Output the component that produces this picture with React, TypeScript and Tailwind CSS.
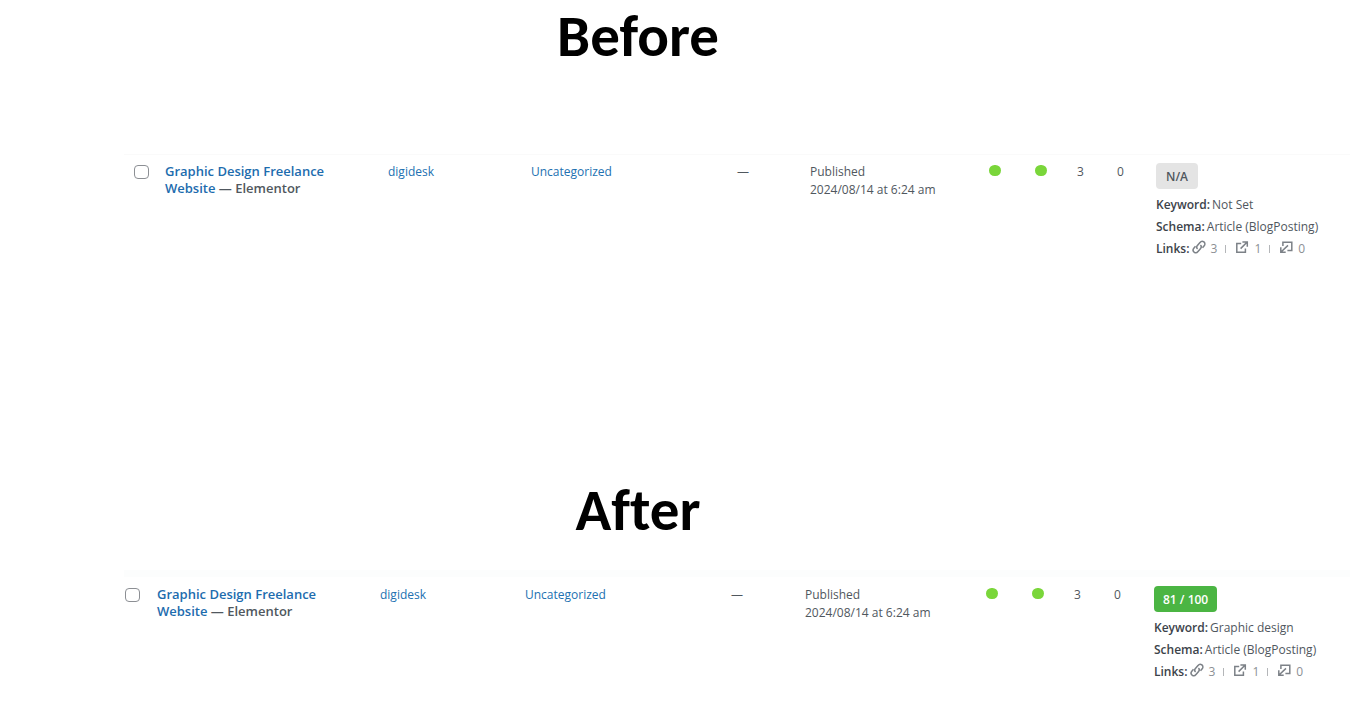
import type { ReactNode } from "react";

type Post = {
  id: string;
  heading: string;
  score: string;
  scoreClass: string;
  keyword: string;
  columns: string[];
  sectionClass: string;
  dividerClass: string;
  tableClass: string;
};

const posts: Post[] = [
  {
    id: "before",
    heading: "Before",
    score: "N/A",
    scoreClass: "bg-[#e4e4e4] px-[10px] text-[#50575e]",
    keyword: "Not Set",
    columns: ["w-[31px]", "w-[223px]", "w-[143px]", "w-[206px]", "w-[73px]", "w-[179px]", "w-[46px]", "w-[42px]", "w-[40px]", "w-[39px]", ""],
    sectionClass: "pt-[2px]",
    dividerClass: "mt-[84px] ml-[124px] h-px bg-[#fafafa]",
    tableClass: "mt-2 pl-[134px]",
  },
  {
    id: "after",
    heading: "After",
    score: "81 / 100",
    scoreClass: "bg-[#4bb543] px-[9px] text-white",
    keyword: "Graphic design",
    columns: ["w-[32px]", "w-[223px]", "w-[145px]", "w-[206px]", "w-[74px]", "w-[181px]", "w-[46px]", "w-[42px]", "w-[40px]", "w-[40px]", ""],
    sectionClass: "pt-[216px]",
    dividerClass: "mt-[26px] ml-[124px] h-[7px] bg-[#fcfdfd]",
    tableClass: "mt-[9px] pl-[125px]",
  },
];

function Icon({ children }: { children: ReactNode }) {
  return (
    <svg viewBox="0 0 14 14" className="mb-1 size-[14px] shrink-0" fill="none" stroke="#7c8187" strokeWidth="1.5" aria-hidden="true">
      {children}
    </svg>
  );
}

function ChainIcon() {
  return (
    <Icon>
      <path d="M5.6 8.8C4.5 7.9 4.5 6.6 5.4 5.5L8 2.4C9 1.2 10.7 1 11.9 1.9C13.1 2.9 13.2 4.5 12.2 5.7L10.5 7.7" />
      <path d="M8.4 5.2C9.5 6.1 9.5 7.4 8.6 8.5L6 11.6C5 12.8 3.3 13 2.1 12.1C.9 11.1 .8 9.5 1.8 8.3L3.5 6.3" />
    </Icon>
  );
}

function ExternalIcon() {
  return (
    <Icon>
      <path d="M6.2 3.5H1.8V12.2H10.4V8.4" />
      <path d="M7.4 1.9H12.3V6.8M12.2 2L5.6 8.6" />
    </Icon>
  );
}

function IncomingIcon() {
  return (
    <Icon>
      <path d="M3.9 6V2.2H12.8V10.4H8.4" />
      <path d="M1.8 7.3V12.2H6.7M2 12L9 5.4" />
    </Icon>
  );
}

function Dot() {
  return <span className="mt-[2px] block h-[11px] w-3 rounded-full bg-[#7ad63a]" />;
}

function Separator() {
  return <span className="mr-[9px] ml-2 h-2 w-px bg-[#b4b6b9]" />;
}

function Detail({ label, children }: { label: string; children: ReactNode }) {
  return (
    <div className="flex items-center whitespace-nowrap leading-[22px]">
      <span className="mr-[2px] font-semibold text-[#3c434a]">{label}:</span>
      {children}
    </div>
  );
}

function PostSection({ post }: { post: Post }) {
  return (
    <section className={post.sectionClass}>
      <h2 className="pr-[74px] text-center font-['Carlito','Calibri','Open_Sans',sans-serif] text-[59px] leading-[68px] font-bold text-black [font-variant-ligatures:none]">
        {post.heading}
      </h2>
      <div className={post.dividerClass} />
      <div className={post.tableClass}>
        <table className="w-full table-fixed border-collapse text-left text-xs leading-[18px] text-[#50575e]">
          <colgroup>
            {post.columns.map((width, i) => (
              <col key={i} className={width} />
            ))}
          </colgroup>
          <tbody>
            <tr className="align-top">
              <td className="pt-[2px]">
                <input
                  type="checkbox"
                  id={`select-${post.id}`}
                  aria-label="Select Graphic Design Freelance Website"
                  className="block h-[14px] w-[15px] appearance-none rounded-[4px] border border-[#8c8f94] bg-white checked:bg-[#2271b1]"
                />
              </td>
              <td className="whitespace-nowrap text-[13px] leading-[17px] font-semibold text-[#50575e]">
                <a href="#" className="text-[#1d6cae]">Graphic Design Freelance<br />Website</a> — Elementor
              </td>
              <td><a href="#" className="text-[#2271b1]">digidesk</a></td>
              <td><a href="#" className="text-[#2271b1]">Uncategorized</a></td>
              <td>—</td>
              <td className="whitespace-nowrap">Published<br />2024/08/14 at 6:24 am</td>
              <td><Dot /></td>
              <td><Dot /></td>
              <td>3</td>
              <td>0</td>
              <td>
                <span className={`inline-block rounded-[4px] pt-[5px] pb-[3px] font-semibold ${post.scoreClass}`}>{post.score}</span>
                <div className="mt-[5px]">
                  <Detail label="Keyword">{post.keyword}</Detail>
                  <Detail label="Schema">Article (BlogPosting)</Detail>
                  <Detail label="Links">
                    <ChainIcon />
                    <span className="ml-[5px] text-[#8c8f94]">3</span>
                    <Separator />
                    <ExternalIcon />
                    <span className="ml-[5px] text-[#8c8f94]">1</span>
                    <Separator />
                    <IncomingIcon />
                    <span className="ml-[5px] text-[#8c8f94]">0</span>
                  </Detail>
                </div>
              </td>
            </tr>
          </tbody>
        </table>
      </div>
    </section>
  );
}

export default function App() {
  return (
    <main className="min-h-screen bg-white font-['Open_Sans','Noto_Sans',sans-serif]">
      {posts.map((post) => (
        <PostSection key={post.id} post={post} />
      ))}
    </main>
  );
}
